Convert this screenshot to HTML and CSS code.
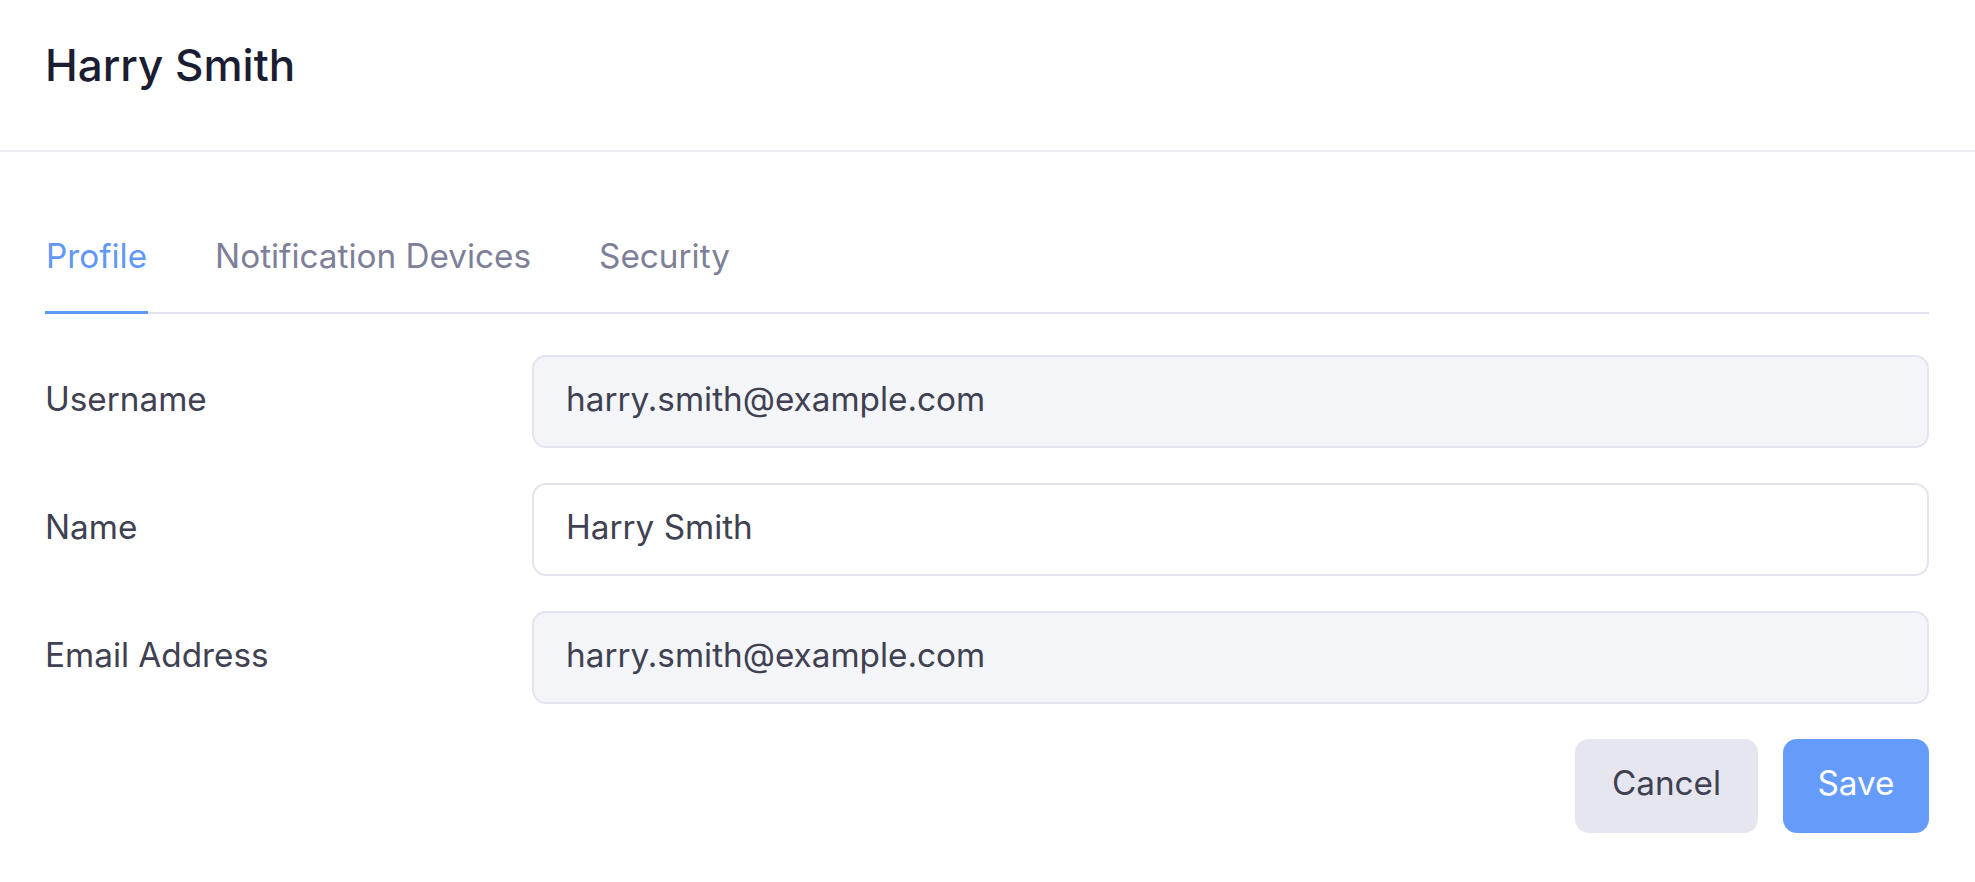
FILE: index.html
```html
<!DOCTYPE html>
<html lang="en">
<head>
<meta charset="utf-8">
<title>Harry Smith</title>
<link rel="stylesheet" href="styles.css">
</head>
<body>
<header class="page-header">
  <h1 class="page-title">Harry Smith</h1>
</header>
<main class="content">
  <nav class="tabs">
    <a class="tab tab-active">Profile</a>
    <a class="tab">Notification Devices</a>
    <a class="tab">Security</a>
  </nav>
  <form class="profile-form">
    <div class="form-row">
      <label class="form-label">Username</label>
      <div class="field field-readonly">harry.smith@example.com</div>
    </div>
    <div class="form-row">
      <label class="form-label">Name</label>
      <div class="field">Harry Smith</div>
    </div>
    <div class="form-row">
      <label class="form-label">Email Address</label>
      <div class="field field-readonly">harry.smith@example.com</div>
    </div>
    <div class="form-actions">
      <button type="button" class="btn btn-cancel">Cancel</button>
      <button type="button" class="btn btn-save">Save</button>
    </div>
  </form>
</main>
</body>
</html>
```

FILE: styles.css
```css
* { box-sizing: border-box; }
html, body { margin: 0; padding: 0; background: #ffffff; }
body {
  font-family: "Inter", "Noto Sans", sans-serif;
  color: #3f4152;
}
.page-header {
  height: 152px;
  padding: 43px 45px 0 45px;
  border-bottom: 2px solid #ececf2;
}
.page-title {
  margin: 0;
  font-size: 44px;
  line-height: 44px;
  font-weight: 500;
  color: #1b1d33;
}
.content { padding: 0 46px 0 45px; }
.tabs {
  display: flex;
  gap: 66px;
  margin-top: 84px;
  border-bottom: 2px solid #e3e3ef;
}
.tab {
  font-size: 33.3px;
  line-height: 40px;
  color: #7d8098;
  padding: 0 1px 35px 1px;
  border-bottom: 3px solid transparent;
  margin-bottom: -2px;
}
.tab-active { color: #5f98f7; border-bottom-color: #5f98f7; }
.profile-form {
  padding-top: 41px;
  display: flex;
  flex-direction: column;
  gap: 35px;
}
.form-row {
  display: flex;
  align-items: center;
}
.form-label {
  width: 487px;
  flex: none;
  font-size: 33.3px;
  line-height: 40px;
  padding-bottom: 6px;
  color: #3f4152;
}
.field {
  flex: 1;
  height: 93px;
  border: 2px solid #e4e4ef;
  border-radius: 14px;
  background: #ffffff;
  padding: 0 32px 6px 32px;
  display: flex;
  align-items: center;
  font-size: 33.3px;
  color: #3f4152;
}
.field-readonly { background: #f4f5f9; }
.form-actions {
  display: flex;
  justify-content: flex-end;
  gap: 25px;
}
.btn {
  height: 94px;
  border: none;
  border-radius: 14px;
  font-family: inherit;
  font-size: 33.3px;
  padding: 0 0 6px 0;
  text-align: center;
}
.btn-cancel { background: #e6e6f0; color: #3f4152; width: 183px; }
.btn-save { background: #659cfb; color: #ffffff; width: 146px; }
```
